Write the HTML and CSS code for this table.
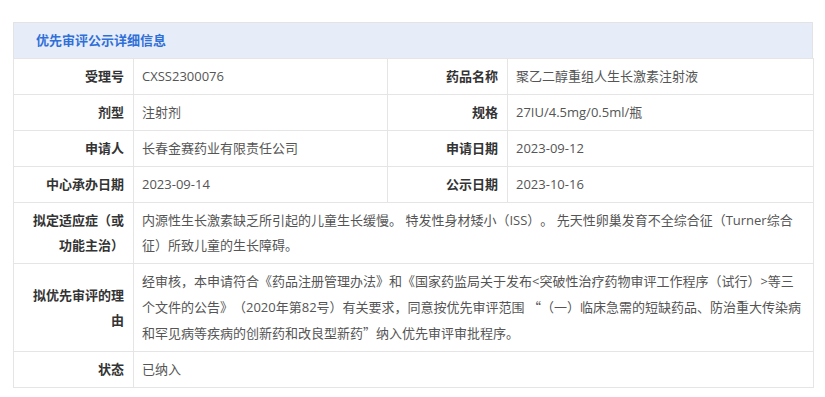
FILE: index.html
```html
<!DOCTYPE html>
<html lang="zh-CN">
<head>
<meta charset="utf-8">
<title>优先审评公示详细信息</title>
<link rel="stylesheet" href="styles.css">
</head>
<body>
<div class="page">
  <div class="panel-title">优先审评公示详细信息</div>
  <table class="detail">
    <colgroup>
      <col class="c-label">
      <col class="c-value">
      <col class="c-label">
      <col class="c-value2">
    </colgroup>
    <tbody>
      <tr>
        <th>受理号</th><td>CXSS2300076</td>
        <th>药品名称</th><td>聚乙二醇重组人生长激素注射液</td>
      </tr>
      <tr>
        <th>剂型</th><td>注射剂</td>
        <th>规格</th><td>27IU/4.5mg/0.5ml/瓶</td>
      </tr>
      <tr>
        <th>申请人</th><td>长春金赛药业有限责任公司</td>
        <th>申请日期</th><td>2023-09-12</td>
      </tr>
      <tr>
        <th>中心承办日期</th><td>2023-09-14</td>
        <th>公示日期</th><td>2023-10-16</td>
      </tr>
      <tr>
        <th>拟定适应症（或功能主治）</th>
        <td colspan="3">内源性生长激素缺乏所引起的儿童生长缓慢。 特发性身材矮小（ISS）。 先天性卵巢发育不全综合征（Turner综合征）所致儿童的生长障碍。</td>
      </tr>
      <tr>
        <th>拟优先审评的理由</th>
        <td colspan="3">经审核，本申请符合《药品注册管理办法》和《国家药监局关于发布&lt;突破性治疗药物审评工作程序（试行）&gt;等三个文件的公告》（2020年第82号）有关要求，同意按优先审评范围 <span class="cjk">“</span>（一）临床急需的短缺药品、防治重大传染病和罕见病等疾病的创新药和改良型新药<span class="cjk">”</span>纳入优先审评审批程序。</td>
      </tr>
      <tr>
        <th>状态</th><td colspan="3">已纳入</td>
      </tr>
    </tbody>
  </table>
</div>
</body>
</html>
```

FILE: styles.css
```css
html, body {
  margin: 0;
  padding: 0;
  background: #ffffff;
}

body {
  font-family: "Open Sans", "Noto Sans CJK SC", sans-serif;
  font-size: 13px;
  color: #555555;
  text-spacing-trim: space-all;
}

.page {
  padding: 22px 12px 0 13px;
}

.panel-title {
  box-sizing: border-box;
  width: 800px;
  height: 36px;
  line-height: 35px;
  padding-left: 22px;
  background: #e6edf8;
  border: 1px solid #e3e3e3;
  border-bottom: none;
  color: #2f6fd8;
  font-weight: 700;
}

.detail {
  width: 800px;
  border-collapse: collapse;
  table-layout: fixed;
}

.c-label { width: 120px; }
.c-value { width: 254px; }
.c-value2 { width: 306px; }

.detail th,
.detail td {
  border: 1px solid #e5e5e5;
  padding: 5px 9px 5px 8px;
  line-height: 25px;
  vertical-align: middle;
}

.detail th {
  text-align: right;
  font-weight: 700;
  color: #333333;
}

.detail td {
  text-align: left;
  font-weight: 400;
  color: #555555;
}

.cjk {
  font-family: "Noto Sans CJK SC", sans-serif;
}
```
